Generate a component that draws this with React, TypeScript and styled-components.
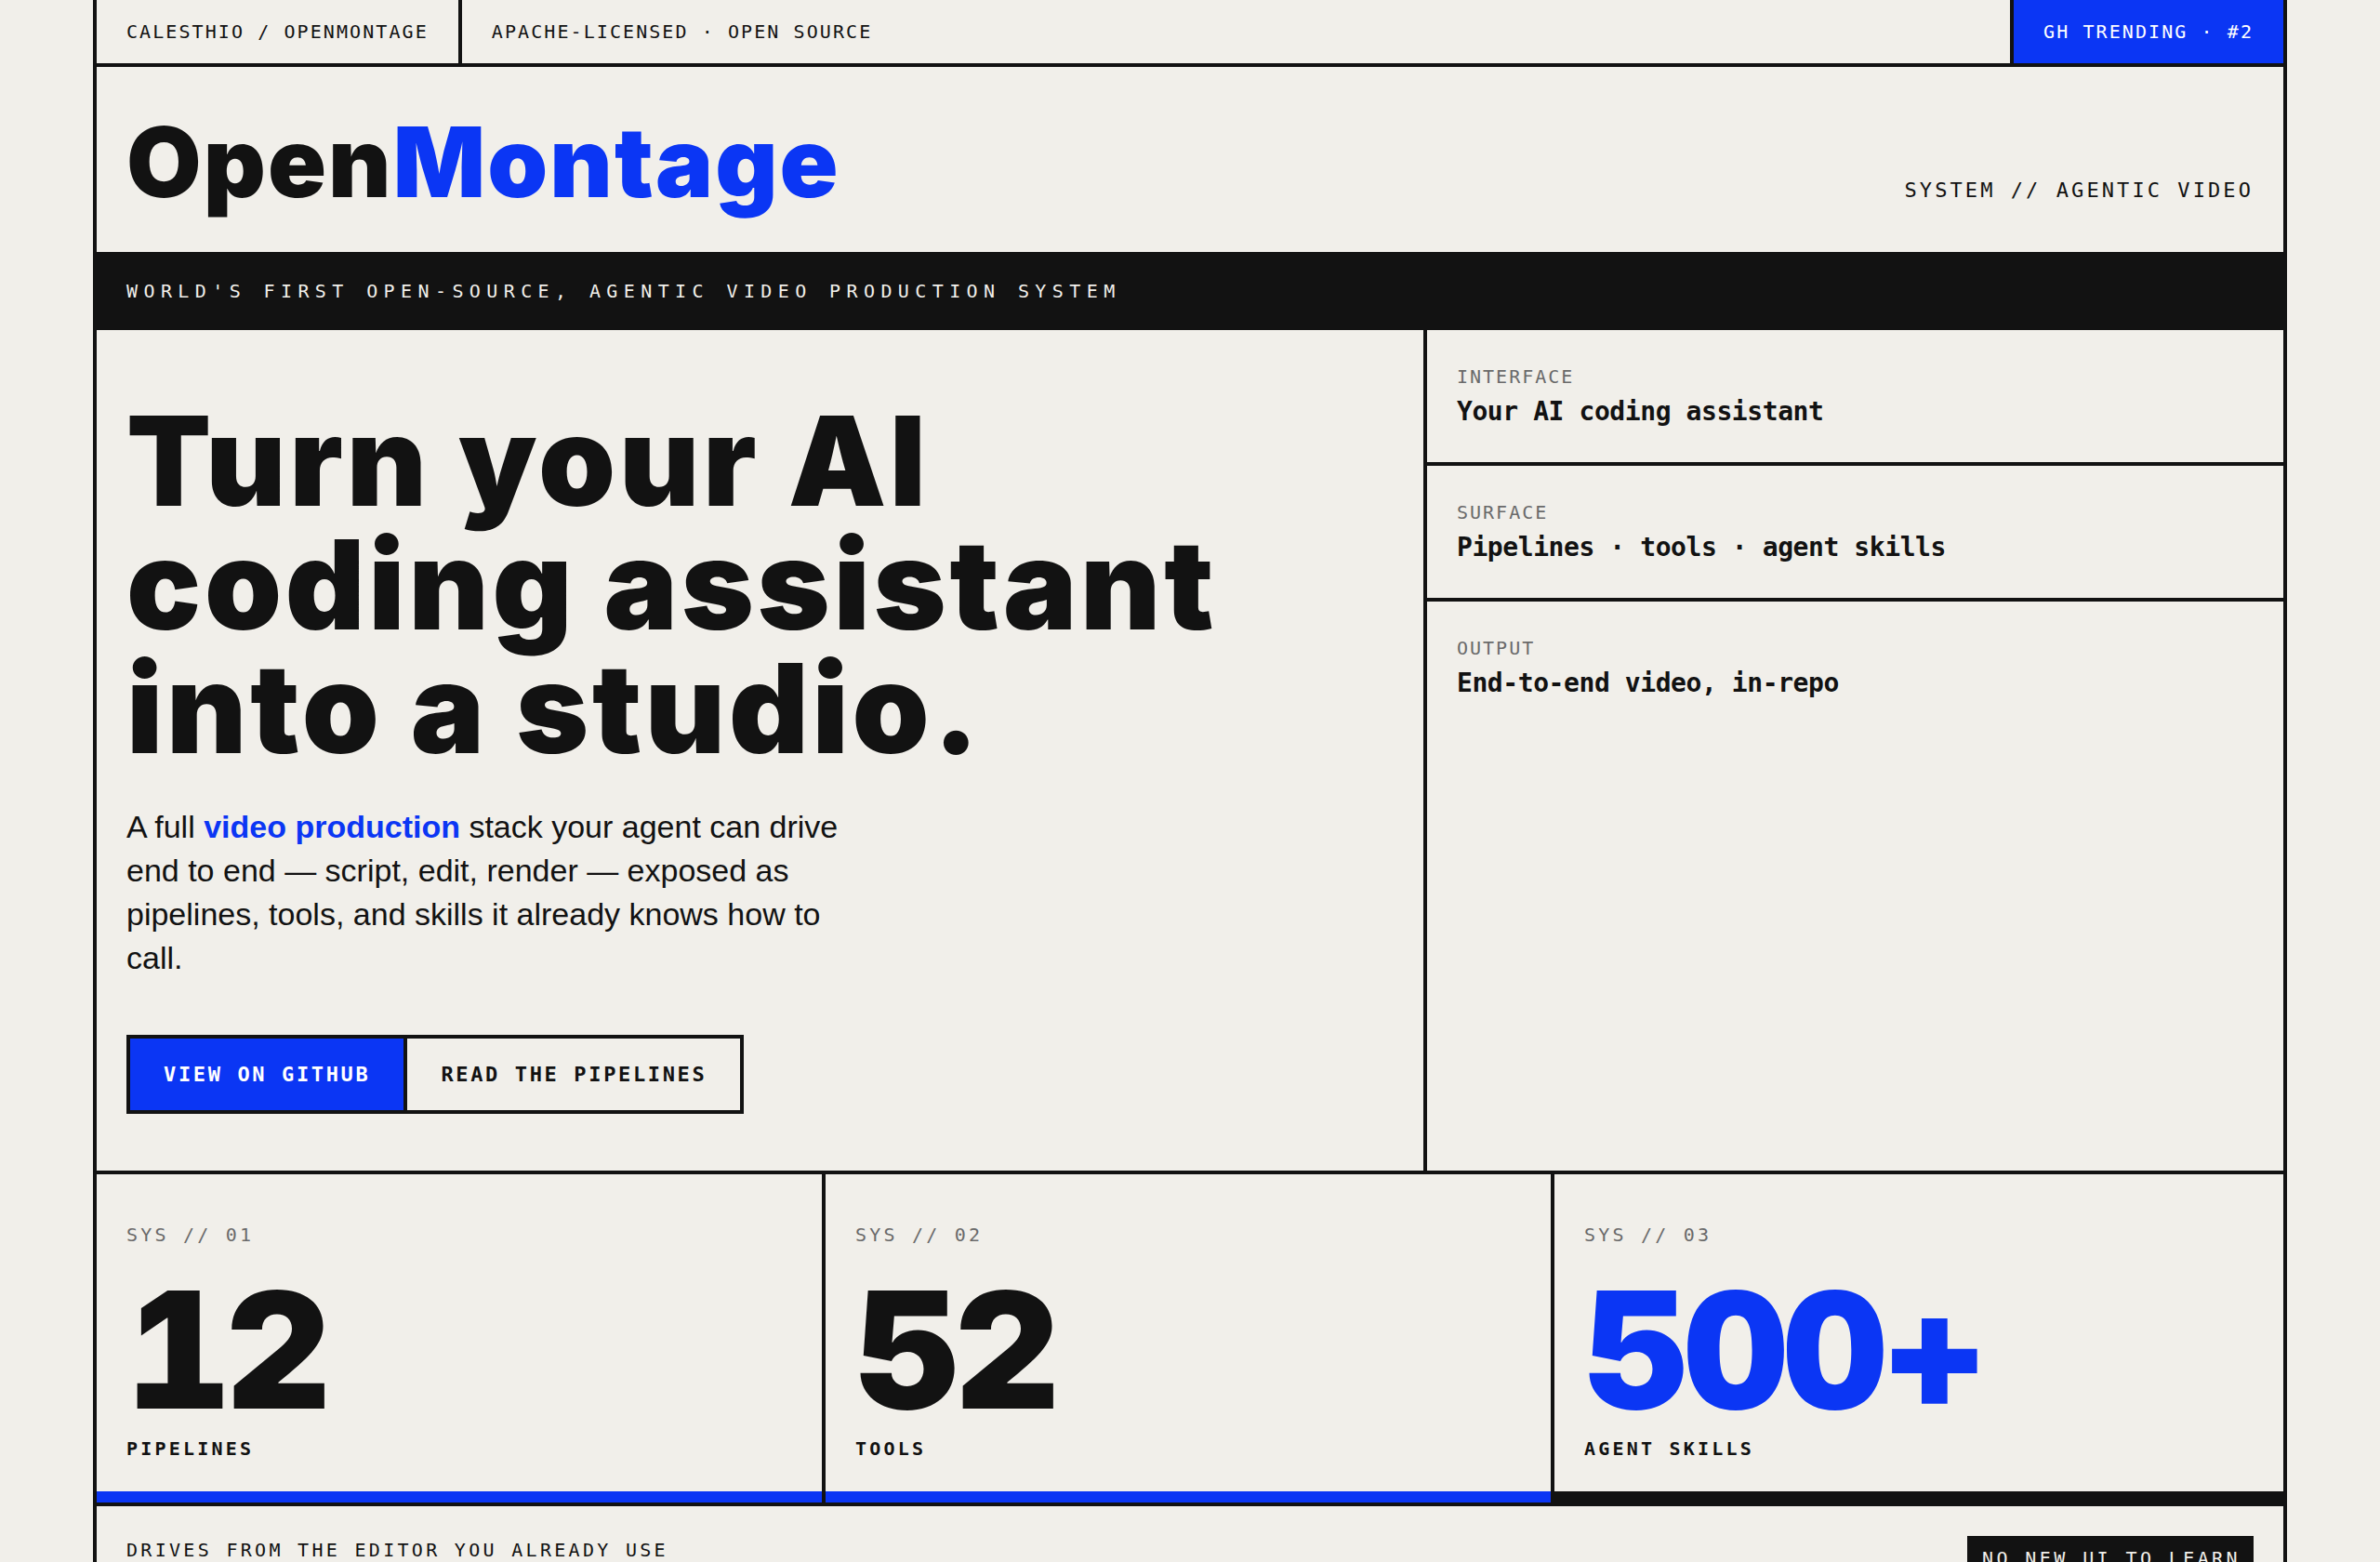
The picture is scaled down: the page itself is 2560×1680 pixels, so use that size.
import React from "react";
import styled, { createGlobalStyle } from "styled-components";

const C = {
  bg: "#f1efea",
  ink: "#121212",
  blue: "#0b36f4",
  mute: "#6a6a6a",
};
const MONO = `"DejaVu Sans Mono", "Liberation Mono", monospace`;
const DISPLAY = `Inter, "Liberation Sans", Arial, sans-serif`;
const BODY = `"Liberation Sans", Arial, sans-serif`;

const GlobalStyle = createGlobalStyle`
  html, body {
    margin: 0;
    padding: 0;
    background: ${C.bg};
    color: ${C.ink};
  }
  * { box-sizing: border-box; }
`;

const Frame = styled.div`
  width: 2360px;
  margin: 0 auto;
  border-left: 4px solid ${C.ink};
  border-right: 4px solid ${C.ink};
  background: ${C.bg};
`;

/* ---------- top bar ---------- */
const TopBar = styled.div`
  display: flex;
  height: 72px;
  border-bottom: 4px solid ${C.ink};
`;

const TopCell = styled.div<{ $grow?: boolean; $divider?: boolean }>`
  display: flex;
  align-items: center;
  padding: 0 32px;
  flex: ${(p) => (p.$grow ? "1 1 auto" : "0 0 auto")};
  border-right: ${(p) => (p.$divider ? `4px solid ${C.ink}` : "none")};
  font-family: ${MONO};
  font-size: 20px;
  line-height: 1;
  letter-spacing: 0.104em;
  text-transform: uppercase;
  white-space: nowrap;
`;

const Badge = styled(TopCell)`
  background: ${C.blue};
  color: #ffffff;
  border-left: 4px solid ${C.ink};
`;

/* ---------- header ---------- */
const Header = styled.header`
  display: flex;
  justify-content: space-between;
  align-items: baseline;
  padding: 50px 32px 45px;
`;

const Logo = styled.h1`
  margin: 0;
  font-family: ${DISPLAY};
  font-weight: 900;
  font-size: 104px;
  line-height: 1;
  letter-spacing: 0.02em;
  color: ${C.ink};
`;

const LogoAccent = styled.span`
  color: ${C.blue};
`;

const HeaderTag = styled.div`
  font-family: ${MONO};
  font-size: 22px;
  line-height: 1;
  letter-spacing: 0.14em;
  text-transform: uppercase;
`;

const Banner = styled.div`
  background: ${C.ink};
  color: ${C.bg};
  padding: 32px;
  font-family: ${MONO};
  font-size: 20px;
  line-height: 20px;
  letter-spacing: 0.32em;
  text-transform: uppercase;
  white-space: nowrap;
`;

/* ---------- hero ---------- */
const Hero = styled.section`
  display: grid;
  grid-template-columns: 1fr 921px;
`;

const HeroMain = styled.div`
  padding: 74px 32px 61px;
  border-right: 4px solid ${C.ink};
`;

const Headline = styled.h2`
  margin: 0;
  font-family: ${DISPLAY};
  font-weight: 900;
  font-size: 133px;
  line-height: 1;
  letter-spacing: 0.028em;
  color: ${C.ink};
`;

const Lead = styled.p`
  margin: 38px 0 0;
  max-width: 790px;
  font-family: ${BODY};
  font-size: 34px;
  line-height: 1.38;
  color: ${C.ink};
`;

const LeadMark = styled.strong`
  color: ${C.blue};
  font-weight: 700;
`;

const Actions = styled.div`
  display: flex;
  margin-top: 59px;
`;

const Action = styled.a<{ $primary?: boolean }>`
  display: inline-flex;
  align-items: center;
  padding: 27px 36px;
  border: 4px solid ${C.ink};
  background: ${(p) => (p.$primary ? C.blue : "transparent")};
  color: ${(p) => (p.$primary ? "#ffffff" : C.ink)};
  font-family: ${MONO};
  font-weight: 700;
  font-size: 22px;
  line-height: 23px;
  letter-spacing: 0.12em;
  text-transform: uppercase;
  text-decoration: none;
  & + & {
    border-left: none;
  }
`;

const HeroSide = styled.div`
  display: flex;
  flex-direction: column;
`;

const Spec = styled.div<{ $fill?: boolean }>`
  padding: 40px 32px;
  flex: ${(p) => (p.$fill ? "1 1 auto" : "0 0 auto")};
  border-bottom: ${(p) => (p.$fill ? "none" : `4px solid ${C.ink}`)};
`;

const SpecLabel = styled.div`
  font-family: ${MONO};
  font-size: 20px;
  line-height: 1;
  letter-spacing: 0.1em;
  text-transform: uppercase;
  color: ${C.mute};
`;

const SpecValue = styled.div`
  margin-top: 14px;
  font-family: ${MONO};
  font-weight: 700;
  font-size: 28px;
  line-height: 1;
  letter-spacing: -0.015em;
  color: ${C.ink};
`;

/* ---------- stats ---------- */
const Stats = styled.section`
  display: grid;
  grid-template-columns: 784px 784px 1fr;
  border-top: 4px solid ${C.ink};
  border-bottom: 4px solid ${C.ink};
`;

const StatCell = styled.div<{ $last?: boolean }>`
  display: flex;
  flex-direction: column;
  border-right: ${(p) => (p.$last ? "none" : `4px solid ${C.ink}`)};
`;

const StatBody = styled.div`
  flex: 1 1 auto;
  padding: 55px 32px 36px;
`;

const StatLabel = styled.div`
  font-family: ${MONO};
  font-size: 20px;
  line-height: 1;
  letter-spacing: 0.16em;
  color: ${C.mute};
`;

const StatNumber = styled.div<{ $accent?: boolean }>`
  margin-top: 27px;
  font-family: ${DISPLAY};
  font-weight: 900;
  font-size: 174px;
  line-height: 1;
  letter-spacing: -0.03em;
  font-variant-numeric: tabular-nums;
  color: ${(p) => (p.$accent ? C.blue : C.ink)};
`;

const StatName = styled.div`
  margin-top: 9px;
  font-family: ${MONO};
  font-weight: 700;
  font-size: 20px;
  line-height: 1;
  letter-spacing: 0.16em;
  text-transform: uppercase;
`;

const StatBar = styled.div<{ $dark?: boolean }>`
  height: 12px;
  background: ${(p) => (p.$dark ? C.ink : C.blue)};
`;

/* ---------- footer strip ---------- */
const Strip = styled.section`
  display: flex;
  justify-content: space-between;
  align-items: flex-start;
  padding: 32px;
`;

const StripLead = styled.div`
  padding-top: 3px;
  font-family: ${MONO};
  font-size: 20px;
  line-height: 1.2;
  letter-spacing: 0.165em;
  text-transform: uppercase;
`;

const StripTag = styled.div`
  background: ${C.ink};
  color: ${C.bg};
  padding: 12px 14px 12px 16px;
  font-family: ${MONO};
  font-size: 20px;
  line-height: 1.2;
  letter-spacing: 0.17em;
  text-transform: uppercase;
`;

const specs = [
  { label: "Interface", value: "Your AI coding assistant" },
  { label: "Surface", value: "Pipelines · tools · agent skills" },
  { label: "Output", value: "End-to-end video, in-repo" },
];

const stats = [
  { code: "SYS // 01", value: "12", name: "Pipelines", accent: false },
  { code: "SYS // 02", value: "52", name: "Tools", accent: false },
  { code: "SYS // 03", value: "500+", name: "Agent skills", accent: true },
];

export default function App() {
  return (
    <>
      <GlobalStyle />
      <Frame>
        <TopBar>
          <TopCell $divider>calesthio / openmontage</TopCell>
          <TopCell $grow>Apache-licensed · open source</TopCell>
          <Badge>GH trending · #2</Badge>
        </TopBar>

        <Header>
          <Logo>
            Open<LogoAccent>Montage</LogoAccent>
          </Logo>
          <HeaderTag>System // agentic video</HeaderTag>
        </Header>

        <Banner>World's first open-source, agentic video production system</Banner>

        <Hero>
          <HeroMain>
            <Headline>
              Turn your AI
              <br />
              coding assistant
              <br />
              into a studio.
            </Headline>
            <Lead>
              A full <LeadMark>video production</LeadMark> stack your agent can drive end to end —
              script, edit, render — exposed as pipelines, tools, and skills it already knows how
              to call.
            </Lead>
            <Actions>
              <Action $primary href="#">View on GitHub</Action>
              <Action href="#">Read the pipelines</Action>
            </Actions>
          </HeroMain>
          <HeroSide>
            {specs.map((s, i) => (
              <Spec key={s.label} $fill={i === specs.length - 1}>
                <SpecLabel>{s.label}</SpecLabel>
                <SpecValue>{s.value}</SpecValue>
              </Spec>
            ))}
          </HeroSide>
        </Hero>

        <Stats>
          {stats.map((s, i) => (
            <StatCell key={s.code} $last={i === stats.length - 1}>
              <StatBody>
                <StatLabel>{s.code}</StatLabel>
                <StatNumber $accent={s.accent}>{s.value}</StatNumber>
                <StatName>{s.name}</StatName>
              </StatBody>
              <StatBar $dark={i === stats.length - 1} />
            </StatCell>
          ))}
        </Stats>

        <Strip>
          <StripLead>Drives from the editor you already use</StripLead>
          <StripTag>No new UI to learn</StripTag>
        </Strip>
      </Frame>
    </>
  );
}
